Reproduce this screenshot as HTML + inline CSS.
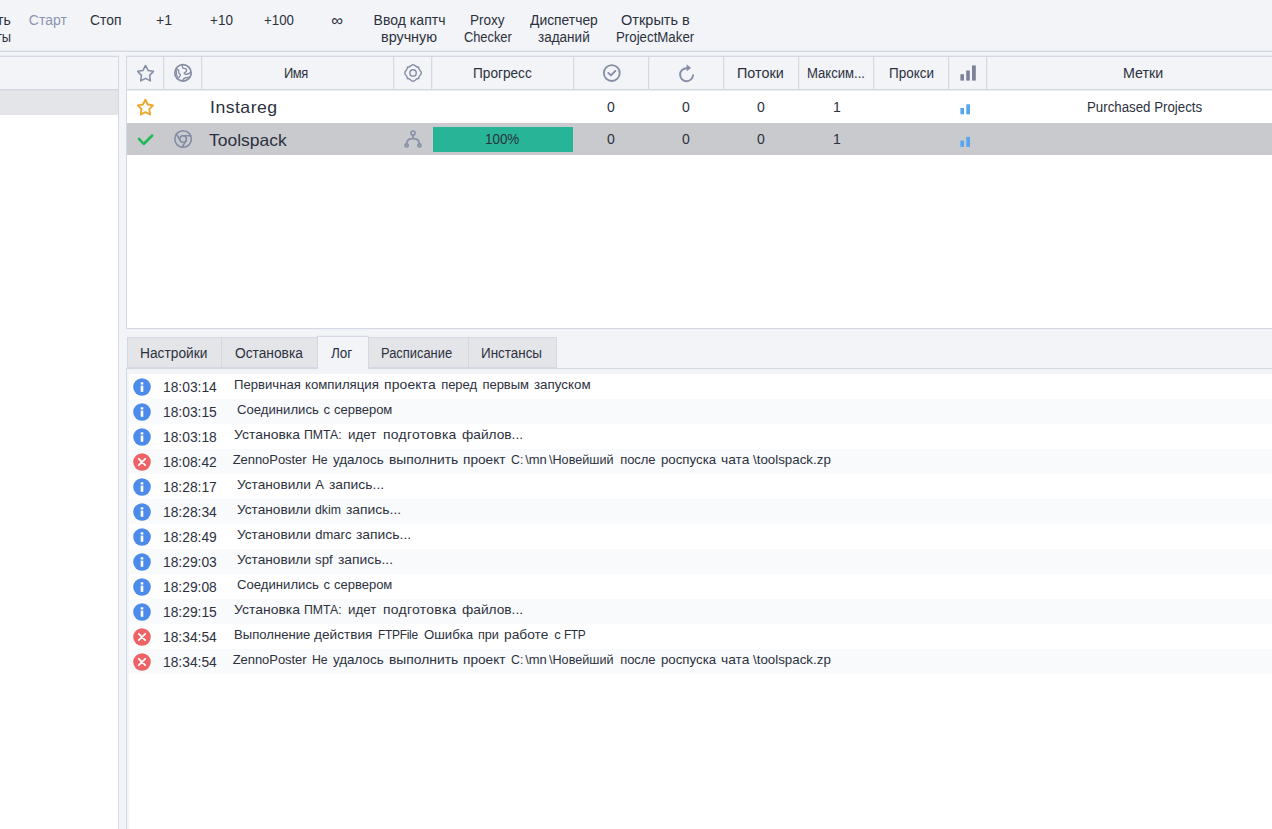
<!DOCTYPE html>
<html lang="ru">
<head>
<meta charset="utf-8">
<title>ZennoPoster</title>
<style>
html,body{margin:0;padding:0}
body{width:1272px;height:829px;overflow:hidden;position:relative;background:#f2f4f8;font-family:"Liberation Sans",sans-serif;color:#2c313d}
div,svg,span{position:absolute}
.t{white-space:pre;transform-origin:0 0;line-height:1;font-family:"Liberation Sans",sans-serif;color:#2c313d}
.ln{background:#d3d8e2}
.w{background:#fff}
.sep{top:57px;width:1px;height:32px;background:#d5d9e3;box-shadow:1px 0 0 #eaedf3}
.tab{top:337px;height:31px;background:#e4e5e9;border:1px solid #d3d8e2;box-sizing:border-box}
.stripe{left:129px;width:1143px;height:25px;background:#f9fafc}
.ic{overflow:visible}
</style>
</head>
<body>
<!-- toolbar bottom line -->
<div style="left:0;top:50px;width:1272px;height:1px;background:#e5e8ef"></div>
<div class="ln" style="left:0;top:51px;width:1272px;height:1px"></div>
<div style="left:0;top:52px;width:1272px;height:1px;background:#f5f6fa"></div>

<!-- left panel -->
<div style="left:0;top:55px;width:119px;height:1px;background:#e8ebf1"></div>
<div style="left:126px;top:55px;width:1146px;height:1px;background:#e8ebf1"></div>
<div class="ln" style="left:0;top:56px;width:119px;height:1px"></div>
<div class="ln" style="left:118px;top:56px;width:1px;height:773px"></div>
<div class="ln" style="left:0;top:89px;width:118px;height:1px"></div>
<div class="w" style="left:0;top:90px;width:118px;height:739px"></div>
<div style="left:0;top:90px;width:118px;height:25px;background:#e4e5e9"></div>

<!-- right: table panel -->
<div class="ln" style="left:126px;top:56px;width:1146px;height:1px"></div>
<div class="ln" style="left:126px;top:56px;width:1px;height:273px"></div>
<div class="ln" style="left:126px;top:368px;width:1px;height:461px"></div>
<div class="ln" style="left:127px;top:89px;width:1145px;height:1px"></div>
<div class="w" style="left:127px;top:90px;width:1145px;height:238px"></div>
<div style="left:127px;top:123px;width:1145px;height:32px;background:#c9cace"></div>
<div class="ln" style="left:126px;top:328px;width:1146px;height:1px"></div>
<div style="left:127px;top:329px;width:1145px;height:39px;background:#f2f4f8"></div>
<div style="left:127px;top:90px;width:1145px;height:1px;background:#e9ecf1"></div>
<div style="left:0;top:90px;width:118px;height:1px;background:#dcdfe5"></div>
<div style="left:127px;top:329px;width:1145px;height:1px;background:#eceff4"></div>
<!-- column separators -->
<div class="sep" style="left:163px"></div>
<div class="sep" style="left:201px"></div>
<div class="sep" style="left:393px"></div>
<div class="sep" style="left:431px"></div>
<div class="sep" style="left:573px"></div>
<div class="sep" style="left:648px"></div>
<div class="sep" style="left:723px"></div>
<div class="sep" style="left:798px"></div>
<div class="sep" style="left:873px"></div>
<div class="sep" style="left:948px"></div>
<div class="sep" style="left:986px"></div>
<!-- progress bar -->
<div style="left:433px;top:127px;width:140px;height:25px;background:#28b496"></div>

<!-- log panel -->
<div class="w" style="left:127px;top:369px;width:1145px;height:460px"></div>
<div style="left:127px;top:369px;width:1145px;height:5px;background:#f2f4f8"></div>
<div style="left:127px;top:369px;width:2px;height:460px;background:#f3f5f9"></div>
<div class="stripe" style="top:399px"></div>
<div class="stripe" style="top:449px"></div>
<div class="stripe" style="top:499px"></div>
<div class="stripe" style="top:549px"></div>
<div class="stripe" style="top:599px"></div>
<div class="stripe" style="top:649px"></div>
<div class="ln" style="left:126px;top:368px;width:1146px;height:1px"></div>
<!-- tabs -->
<div class="tab" style="left:127px;width:95px"></div>
<div class="tab" style="left:221px;width:97px"></div>
<div class="tab" style="left:368px;width:101px"></div>
<div class="tab" style="left:468px;width:89px"></div>
<div style="left:317px;top:335px;width:52px;height:1px;background:#eaedf2"></div>
<div style="left:317px;top:336px;width:52px;height:33px;background:#f2f4f8;border:1px solid #d3d8e2;border-bottom:none;box-sizing:border-box"></div>

<svg style="left:0;top:0" width="1272" height="829" viewBox="0 0 1272 829"><path d="M145.55 65.45 L148.08 70.42 L153.44 71.36 L149.64 75.37 L150.43 80.92 L145.55 78.43 L140.67 80.92 L141.46 75.37 L137.66 71.36 L143.02 70.42 Z" fill="none" stroke="#848da4" stroke-width="1.5" stroke-linejoin="round"/>
<g fill="none" stroke="#858ea5" stroke-width="1.35" stroke-linecap="round" stroke-linejoin="round"><circle cx="183" cy="72.9" r="8.2" stroke-width="1.7"/><path d="M182.3 64.8 L182.5 67.4 Q182.7 68.5 184.2 68.4 Q186.6 68.4 186.6 70.4 Q186.5 72.2 184.6 72.6 Q183.6 73 184.6 73.8 Q187.4 75.2 190.9 72.4"/><path d="M176.2 69 Q178.8 69.6 178.7 71.2 Q178.2 72.8 179.4 73.6 Q181 74.6 180 76 Q179 77.8 177.3 78.6"/><path d="M176.4 70.8 Q175.8 74.4 177.5 77"/><path d="M182.4 80.8 Q182.8 78.6 185 78 Q187.6 77.4 190 77.2"/></g>
<path d="M413.05 64.65 C415.45 64.65 416.58 68.27 418.78 67.17 C417.68 69.37 421.30 70.50 421.30 72.90 C421.30 75.30 417.68 76.43 418.78 78.63 C416.58 77.53 415.45 81.15 413.05 81.15 C410.65 81.15 409.52 77.53 407.32 78.63 C408.42 76.43 404.80 75.30 404.80 72.90 C404.80 70.50 408.42 69.37 407.32 67.17 C409.52 68.27 410.65 64.65 413.05 64.65 Z" fill="none" stroke="#858ea5" stroke-width="1.45" stroke-linejoin="round"/>
<circle cx="413.05" cy="72.9" r="3.2" fill="none" stroke="#858ea5" stroke-width="1.4"/>
<circle cx="611.8" cy="73" r="7.95" fill="none" stroke="#858ea5" stroke-width="1.85"/>
<path d="M608.3 72.9 L610.9 75.4 L615.4 70.9" fill="none" stroke="#858ea5" stroke-width="1.9" stroke-linecap="round" stroke-linejoin="round"/>
<path d="M686.60 68.20 A6.5 6.5 0 1 0 693.08 75.27" fill="none" stroke="#858ea5" stroke-width="1.9" stroke-linecap="round"/>
<path d="M686.6 64.3 L691.2 67.9 L686.6 71.2 Z" fill="#858ea5"/>
<rect x="960.4" y="74.2" width="3.6" height="6.4" fill="#7a8398"/>
<rect x="966.2" y="70.5" width="3.6" height="10.1" fill="#7a8398"/>
<rect x="972" y="65.4" width="3.8" height="15.2" fill="#7a8398"/>
<path d="M145.40 99.71 L147.81 104.48 L152.96 105.37 L149.30 109.20 L150.07 114.52 L145.40 112.12 L140.73 114.52 L141.50 109.20 L137.84 105.37 L142.99 104.48 Z" fill="none" stroke="#eca72c" stroke-width="1.9" stroke-linejoin="round"/>
<path d="M139 138.9 L143.7 144 L152.2 135.5" fill="none" stroke="#1fba55" stroke-width="2.5" stroke-linecap="round" stroke-linejoin="round"/>
<g fill="none" stroke="#828ca4" stroke-width="1.6" stroke-linecap="round"><circle cx="183.1" cy="139" r="8.3"/><circle cx="183.1" cy="139" r="3.3"/><path d="M183.10 135.70 L190.72 135.70"/><path d="M185.96 140.65 L182.15 147.25"/><path d="M180.24 140.65 L176.43 134.05"/></g>
<g fill="none" stroke="#8891a8" stroke-linecap="round"><circle cx="413" cy="133.05" r="2.05" stroke-width="1.6"/><circle cx="406.6" cy="145.4" r="1.6" stroke-width="1.7" fill="#a9afbf"/><circle cx="419.4" cy="145.4" r="1.6" stroke-width="1.7" fill="#a9afbf"/><path stroke-width="1.7" d="M413 135.6 L413 138.7 M406.7 143.3 C406.9 140.2 409.2 138.7 413 138.7 C416.8 138.7 419.1 140.2 419.3 143.3"/></g>
<rect x="960.4" y="108.0" width="3.6" height="6.3" fill="#55a6ee"/>
<rect x="966.3" y="104.3" width="3.7" height="10" fill="#55a6ee"/>
<rect x="960.4" y="140.6" width="3.6" height="6.3" fill="#55a6ee"/>
<rect x="966.3" y="136.9" width="3.7" height="10" fill="#55a6ee"/></svg>

<svg class="ic" style="left:132.7px;top:377.7px" width="18" height="18" viewBox="0 0 18 18"><circle cx="9" cy="9" r="8.8" fill="#4c8bea"/><rect x="7.7" y="4.3" width="2.6" height="2.2" fill="#fff"/><rect x="7.7" y="7.6" width="2.6" height="6.2" fill="#fff"/></svg>
<svg class="ic" style="left:132.7px;top:402.7px" width="18" height="18" viewBox="0 0 18 18"><circle cx="9" cy="9" r="8.8" fill="#4c8bea"/><rect x="7.7" y="4.3" width="2.6" height="2.2" fill="#fff"/><rect x="7.7" y="7.6" width="2.6" height="6.2" fill="#fff"/></svg>
<svg class="ic" style="left:132.7px;top:427.7px" width="18" height="18" viewBox="0 0 18 18"><circle cx="9" cy="9" r="8.8" fill="#4c8bea"/><rect x="7.7" y="4.3" width="2.6" height="2.2" fill="#fff"/><rect x="7.7" y="7.6" width="2.6" height="6.2" fill="#fff"/></svg>
<svg class="ic" style="left:132.7px;top:452.7px" width="18" height="18" viewBox="0 0 18 18"><circle cx="9" cy="9" r="8.8" fill="#ee6466"/><path d="M5.8 5.8 L12.2 12.2 M12.2 5.8 L5.8 12.2" stroke="#fff" stroke-width="1.75" stroke-linecap="round"/></svg>
<svg class="ic" style="left:132.7px;top:477.7px" width="18" height="18" viewBox="0 0 18 18"><circle cx="9" cy="9" r="8.8" fill="#4c8bea"/><rect x="7.7" y="4.3" width="2.6" height="2.2" fill="#fff"/><rect x="7.7" y="7.6" width="2.6" height="6.2" fill="#fff"/></svg>
<svg class="ic" style="left:132.7px;top:502.7px" width="18" height="18" viewBox="0 0 18 18"><circle cx="9" cy="9" r="8.8" fill="#4c8bea"/><rect x="7.7" y="4.3" width="2.6" height="2.2" fill="#fff"/><rect x="7.7" y="7.6" width="2.6" height="6.2" fill="#fff"/></svg>
<svg class="ic" style="left:132.7px;top:527.7px" width="18" height="18" viewBox="0 0 18 18"><circle cx="9" cy="9" r="8.8" fill="#4c8bea"/><rect x="7.7" y="4.3" width="2.6" height="2.2" fill="#fff"/><rect x="7.7" y="7.6" width="2.6" height="6.2" fill="#fff"/></svg>
<svg class="ic" style="left:132.7px;top:552.7px" width="18" height="18" viewBox="0 0 18 18"><circle cx="9" cy="9" r="8.8" fill="#4c8bea"/><rect x="7.7" y="4.3" width="2.6" height="2.2" fill="#fff"/><rect x="7.7" y="7.6" width="2.6" height="6.2" fill="#fff"/></svg>
<svg class="ic" style="left:132.7px;top:577.7px" width="18" height="18" viewBox="0 0 18 18"><circle cx="9" cy="9" r="8.8" fill="#4c8bea"/><rect x="7.7" y="4.3" width="2.6" height="2.2" fill="#fff"/><rect x="7.7" y="7.6" width="2.6" height="6.2" fill="#fff"/></svg>
<svg class="ic" style="left:132.7px;top:602.7px" width="18" height="18" viewBox="0 0 18 18"><circle cx="9" cy="9" r="8.8" fill="#4c8bea"/><rect x="7.7" y="4.3" width="2.6" height="2.2" fill="#fff"/><rect x="7.7" y="7.6" width="2.6" height="6.2" fill="#fff"/></svg>
<svg class="ic" style="left:132.7px;top:627.7px" width="18" height="18" viewBox="0 0 18 18"><circle cx="9" cy="9" r="8.8" fill="#ee6466"/><path d="M5.8 5.8 L12.2 12.2 M12.2 5.8 L5.8 12.2" stroke="#fff" stroke-width="1.75" stroke-linecap="round"/></svg>
<svg class="ic" style="left:132.7px;top:652.7px" width="18" height="18" viewBox="0 0 18 18"><circle cx="9" cy="9" r="8.8" fill="#ee6466"/><path d="M5.8 5.8 L12.2 12.2 M12.2 5.8 L5.8 12.2" stroke="#fff" stroke-width="1.75" stroke-linecap="round"/></svg>

<span class="t" style="left:-3.00px;top:13.45px;font-size:14px;letter-spacing:-0.019px;">ть</span>
<span class="t" style="left:-4.00px;top:29.75px;font-size:14px;letter-spacing:-0.180px;transform:scaleX(0.9200);">ты</span>
<span class="t" style="left:28.80px;top:13.45px;font-size:14px;letter-spacing:-0.012px;color:#8b95ad;">Старт</span>
<span class="t" style="left:89.60px;top:13.45px;font-size:14px;transform:scaleX(0.9895);">Стоп</span>
<span class="t" style="left:156.40px;top:13.45px;font-size:14px;transform:scaleX(1.0082);">+1</span>
<span class="t" style="left:210.40px;top:13.45px;font-size:14px;transform:scaleX(0.9642);">+10</span>
<span class="t" style="left:264.20px;top:13.45px;font-size:14px;transform:scaleX(0.9510);">+100</span>
<span class="t" style="left:331.22px;top:11.93px;font-size:16.5px;">∞</span>
<span class="t" style="left:373.60px;top:13.45px;font-size:14px;letter-spacing:0.025px;">Ввод каптч</span>
<span class="t" style="left:381.00px;top:29.75px;font-size:14px;transform:scaleX(1.0258);">вручную</span>
<span class="t" style="left:469.70px;top:13.45px;font-size:14px;transform:scaleX(0.9666);">Proxy</span>
<span class="t" style="left:463.80px;top:29.75px;font-size:14px;letter-spacing:-0.049px;transform:scaleX(0.9200);">Checker</span>
<span class="t" style="left:530.20px;top:13.45px;font-size:14px;transform:scaleX(0.9900);">Диспетчер</span>
<span class="t" style="left:538.00px;top:29.75px;font-size:14px;transform:scaleX(0.9655);">заданий</span>
<span class="t" style="left:621.00px;top:13.45px;font-size:14px;transform:scaleX(1.0375);">Открыть в</span>
<span class="t" style="left:616.00px;top:29.75px;font-size:14px;transform:scaleX(0.9482);">ProjectMaker</span>
<span class="t" style="left:284.16px;top:65.85px;font-size:14px;letter-spacing:-0.500px;transform:scaleX(0.9200);">Имя</span>
<span class="t" style="left:473.00px;top:65.85px;font-size:14px;transform:scaleX(0.9738);">Прогресс</span>
<span class="t" style="left:736.75px;top:65.85px;font-size:14px;transform:scaleX(1.0268);">Потоки</span>
<span class="t" style="left:806.75px;top:65.85px;font-size:14px;transform:scaleX(0.9352);">Максим...</span>
<span class="t" style="left:888.50px;top:65.85px;font-size:14px;transform:scaleX(0.9626);">Прокси</span>
<span class="t" style="left:1123.40px;top:65.85px;font-size:14px;transform:scaleX(1.0177);">Метки</span>
<span class="t" style="left:209.50px;top:98.93px;font-size:16.5px;letter-spacing:0.441px;transform:scaleX(1.0700);">Instareg</span>
<span class="t" style="left:209.30px;top:131.63px;font-size:16.5px;transform:scaleX(1.0589);">Toolspack</span>
<span class="t" style="left:607.10px;top:100.15px;font-size:14px;">0</span>
<span class="t" style="left:682.10px;top:100.15px;font-size:14px;">0</span>
<span class="t" style="left:757.10px;top:100.15px;font-size:14px;">0</span>
<span class="t" style="left:833.10px;top:100.15px;font-size:14px;">1</span>
<span class="t" style="left:607.10px;top:132.15px;font-size:14px;">0</span>
<span class="t" style="left:682.10px;top:132.15px;font-size:14px;">0</span>
<span class="t" style="left:757.10px;top:132.15px;font-size:14px;">0</span>
<span class="t" style="left:833.10px;top:132.15px;font-size:14px;">1</span>
<span class="t" style="left:1087.10px;top:99.95px;font-size:14px;transform:scaleX(0.9481);">Purchased Projects</span>
<span class="t" style="left:485.00px;top:132.45px;font-size:14px;transform:scaleX(0.9578);">100%</span>
<span class="t" style="left:139.80px;top:346.05px;font-size:14px;transform:scaleX(0.9817);">Настройки</span>
<span class="t" style="left:235.10px;top:346.05px;font-size:14px;transform:scaleX(0.9825);">Остановка</span>
<span class="t" style="left:331.40px;top:346.05px;font-size:14px;transform:scaleX(0.9641);">Лог</span>
<span class="t" style="left:381.40px;top:346.05px;font-size:14px;transform:scaleX(0.9211);">Расписание</span>
<span class="t" style="left:481.00px;top:346.05px;font-size:14px;transform:scaleX(0.9585);">Инстансы</span>
<span class="t" style="left:162.80px;top:380.05px;font-size:14px;transform:scaleX(0.9872);">18:03:14</span>
<span class="t" style="left:233.50px;top:377.70px;font-size:13px;transform:scaleX(1.0090);">Первичная</span>
<span class="t" style="left:305.00px;top:377.70px;font-size:13px;transform:scaleX(1.0167);">компиляция</span>
<span class="t" style="left:383.70px;top:377.70px;font-size:13px;letter-spacing:0.118px;transform:scaleX(1.0700);">проекта</span>
<span class="t" style="left:441.20px;top:377.70px;font-size:13px;letter-spacing:-0.058px;">перед</span>
<span class="t" style="left:482.50px;top:377.70px;font-size:13px;letter-spacing:-0.058px;">первым</span>
<span class="t" style="left:534.40px;top:377.70px;font-size:13px;transform:scaleX(1.0273);">запуском</span>
<span class="t" style="left:162.80px;top:405.05px;font-size:14px;transform:scaleX(0.9872);">18:03:15</span>
<span class="t" style="left:236.60px;top:402.70px;font-size:13px;transform:scaleX(1.0101);">Соединились</span>
<span class="t" style="left:323.40px;top:402.70px;font-size:13px;">с</span>
<span class="t" style="left:334.10px;top:402.70px;font-size:13px;letter-spacing:-0.023px;">сервером</span>
<span class="t" style="left:162.80px;top:430.05px;font-size:14px;transform:scaleX(0.9872);">18:03:18</span>
<span class="t" style="left:233.50px;top:427.70px;font-size:13px;letter-spacing:0.029px;transform:scaleX(1.0700);">Установка</span>
<span class="t" style="left:304.30px;top:427.70px;font-size:13px;transform:scaleX(0.9432);">ПМТА:</span>
<span class="t" style="left:348.30px;top:427.70px;font-size:13px;transform:scaleX(1.0250);">идет</span>
<span class="t" style="left:382.90px;top:427.70px;font-size:13px;letter-spacing:0.264px;transform:scaleX(1.0700);">подготовка</span>
<span class="t" style="left:461.50px;top:427.70px;font-size:13px;transform:scaleX(1.0537);">файлов...</span>
<span class="t" style="left:162.80px;top:455.05px;font-size:14px;transform:scaleX(0.9872);">18:08:42</span>
<span class="t" style="left:232.70px;top:452.70px;font-size:13px;letter-spacing:-0.054px;">ZennoPoster</span>
<span class="t" style="left:312.10px;top:452.70px;font-size:13px;transform:scaleX(0.9444);">Не</span>
<span class="t" style="left:333.00px;top:452.70px;font-size:13px;transform:scaleX(1.0321);">удалось</span>
<span class="t" style="left:388.60px;top:452.70px;font-size:13px;transform:scaleX(1.0646);">выполнить</span>
<span class="t" style="left:463.30px;top:452.70px;font-size:13px;transform:scaleX(1.0486);">проект</span>
<span class="t" style="left:511.30px;top:452.70px;font-size:13px;transform:scaleX(0.9462);">C:</span>
<span class="t" style="left:525.20px;top:452.70px;font-size:13px;letter-spacing:-0.086px;">\mn</span>
<span class="t" style="left:549.40px;top:452.70px;font-size:13px;transform:scaleX(0.9708);">\Новейший</span>
<span class="t" style="left:620.20px;top:452.70px;font-size:13px;letter-spacing:-0.048px;">после</span>
<span class="t" style="left:661.00px;top:452.70px;font-size:13px;transform:scaleX(1.0192);">роспуска</span>
<span class="t" style="left:721.20px;top:452.70px;font-size:13px;transform:scaleX(1.0573);">чата</span>
<span class="t" style="left:752.70px;top:452.70px;font-size:13px;transform:scaleX(1.0254);">\toolspack.zp</span>
<span class="t" style="left:162.80px;top:480.05px;font-size:14px;transform:scaleX(0.9872);">18:28:17</span>
<span class="t" style="left:237.10px;top:477.70px;font-size:13px;transform:scaleX(1.0503);">Установили</span>
<span class="t" style="left:315.26px;top:477.70px;font-size:13px;">A</span>
<span class="t" style="left:328.60px;top:477.70px;font-size:13px;transform:scaleX(1.0676);">запись...</span>
<span class="t" style="left:162.80px;top:505.05px;font-size:14px;transform:scaleX(0.9872);">18:28:34</span>
<span class="t" style="left:237.10px;top:502.70px;font-size:13px;transform:scaleX(1.0503);">Установили</span>
<span class="t" style="left:315.30px;top:502.70px;font-size:13px;transform:scaleX(0.9434);">dkim</span>
<span class="t" style="left:345.90px;top:502.70px;font-size:13px;transform:scaleX(1.0676);">запись...</span>
<span class="t" style="left:162.80px;top:530.05px;font-size:14px;transform:scaleX(0.9872);">18:28:49</span>
<span class="t" style="left:237.10px;top:527.70px;font-size:13px;transform:scaleX(1.0503);">Установили</span>
<span class="t" style="left:315.29px;top:527.70px;font-size:13px;">dmarc</span>
<span class="t" style="left:356.10px;top:527.70px;font-size:13px;transform:scaleX(1.0676);">запись...</span>
<span class="t" style="left:162.80px;top:555.05px;font-size:14px;transform:scaleX(0.9872);">18:29:03</span>
<span class="t" style="left:237.10px;top:552.70px;font-size:13px;transform:scaleX(1.0503);">Установили</span>
<span class="t" style="left:315.30px;top:552.70px;font-size:13px;transform:scaleX(1.0205);">spf</span>
<span class="t" style="left:338.10px;top:552.70px;font-size:13px;transform:scaleX(1.0657);">запись...</span>
<span class="t" style="left:162.80px;top:580.05px;font-size:14px;transform:scaleX(0.9872);">18:29:08</span>
<span class="t" style="left:236.60px;top:577.70px;font-size:13px;transform:scaleX(1.0101);">Соединились</span>
<span class="t" style="left:323.40px;top:577.70px;font-size:13px;">с</span>
<span class="t" style="left:334.10px;top:577.70px;font-size:13px;letter-spacing:-0.023px;">сервером</span>
<span class="t" style="left:162.80px;top:605.05px;font-size:14px;transform:scaleX(0.9872);">18:29:15</span>
<span class="t" style="left:233.50px;top:602.70px;font-size:13px;letter-spacing:0.029px;transform:scaleX(1.0700);">Установка</span>
<span class="t" style="left:304.30px;top:602.70px;font-size:13px;transform:scaleX(0.9432);">ПМТА:</span>
<span class="t" style="left:348.30px;top:602.70px;font-size:13px;transform:scaleX(1.0250);">идет</span>
<span class="t" style="left:382.90px;top:602.70px;font-size:13px;letter-spacing:0.264px;transform:scaleX(1.0700);">подготовка</span>
<span class="t" style="left:461.50px;top:602.70px;font-size:13px;transform:scaleX(1.0537);">файлов...</span>
<span class="t" style="left:162.80px;top:630.05px;font-size:14px;transform:scaleX(0.9872);">18:34:54</span>
<span class="t" style="left:233.50px;top:627.70px;font-size:13px;transform:scaleX(1.0083);">Выполнение</span>
<span class="t" style="left:314.20px;top:627.70px;font-size:13px;transform:scaleX(1.0493);">действия</span>
<span class="t" style="left:378.20px;top:627.70px;font-size:13px;letter-spacing:-0.319px;transform:scaleX(0.9200);">FTPFile</span>
<span class="t" style="left:423.80px;top:627.70px;font-size:13px;transform:scaleX(1.0134);">Ошибка</span>
<span class="t" style="left:477.90px;top:627.70px;font-size:13px;transform:scaleX(0.9707);">при</span>
<span class="t" style="left:504.00px;top:627.70px;font-size:13px;transform:scaleX(1.0599);">работе</span>
<span class="t" style="left:554.20px;top:627.70px;font-size:13px;">с</span>
<span class="t" style="left:563.86px;top:627.70px;font-size:13px;letter-spacing:-0.500px;transform:scaleX(0.9200);">FTP</span>
<span class="t" style="left:162.80px;top:655.05px;font-size:14px;transform:scaleX(0.9872);">18:34:54</span>
<span class="t" style="left:232.70px;top:652.70px;font-size:13px;letter-spacing:-0.054px;">ZennoPoster</span>
<span class="t" style="left:312.10px;top:652.70px;font-size:13px;transform:scaleX(0.9444);">Не</span>
<span class="t" style="left:333.00px;top:652.70px;font-size:13px;transform:scaleX(1.0321);">удалось</span>
<span class="t" style="left:388.60px;top:652.70px;font-size:13px;transform:scaleX(1.0646);">выполнить</span>
<span class="t" style="left:463.30px;top:652.70px;font-size:13px;transform:scaleX(1.0486);">проект</span>
<span class="t" style="left:511.30px;top:652.70px;font-size:13px;transform:scaleX(0.9462);">C:</span>
<span class="t" style="left:525.20px;top:652.70px;font-size:13px;letter-spacing:-0.086px;">\mn</span>
<span class="t" style="left:549.40px;top:652.70px;font-size:13px;transform:scaleX(0.9708);">\Новейший</span>
<span class="t" style="left:620.20px;top:652.70px;font-size:13px;letter-spacing:-0.048px;">после</span>
<span class="t" style="left:661.00px;top:652.70px;font-size:13px;transform:scaleX(1.0192);">роспуска</span>
<span class="t" style="left:721.20px;top:652.70px;font-size:13px;transform:scaleX(1.0573);">чата</span>
<span class="t" style="left:752.70px;top:652.70px;font-size:13px;transform:scaleX(1.0254);">\toolspack.zp</span>
</body>
</html>
